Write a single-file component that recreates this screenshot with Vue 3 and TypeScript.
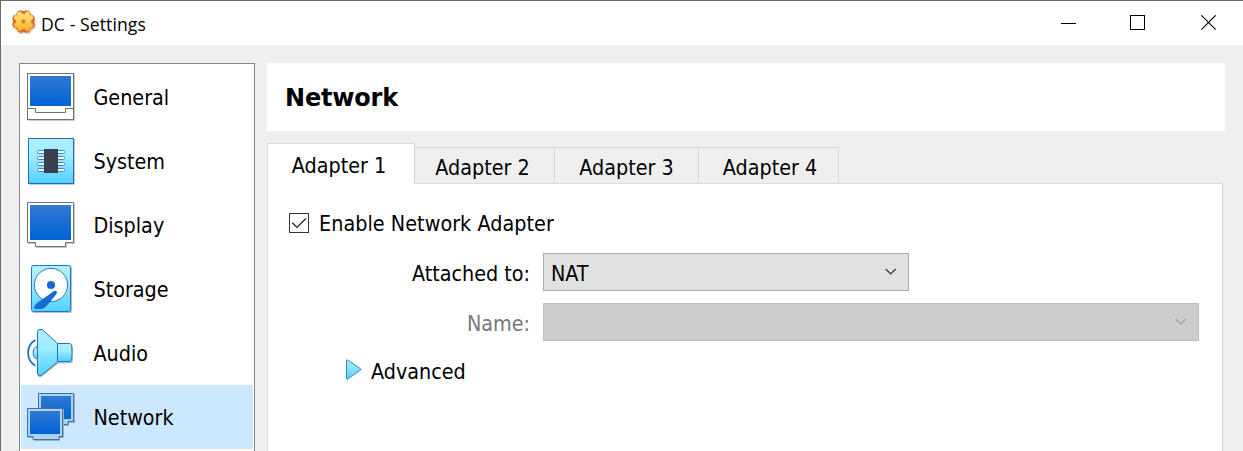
<script setup lang="ts">
import { ref } from 'vue'

const pages = ['General', 'System', 'Display', 'Storage', 'Audio', 'Network']
const currentPage = ref('Network')
const tabs = ['Adapter 1', 'Adapter 2', 'Adapter 3', 'Adapter 4']
const currentTab = ref('Adapter 1')
const enabled = ref(true)
const petals = [0, 45, 90, 135, 180, 225, 270, 315]
const pins = [13, 19, 25, 31]
</script>

<template>
  <div class="window">
    <header class="titlebar">
      <svg class="gear" width="26" height="26" viewBox="0 0 26 26">
        <defs>
          <linearGradient id="gearFill" gradientUnits="userSpaceOnUse" x1="0" y1="2" x2="0" y2="23">
            <stop offset="0" stop-color="#ffe97a" />
            <stop offset="1" stop-color="#fcab2c" />
          </linearGradient>
        </defs>
        <g fill="#9b8f88" opacity="0.5" transform="translate(1 1.2)">
          <circle cx="12.5" cy="12.5" r="10.6" />
          <circle v-for="a in petals" :key="a" cx="12.5" cy="4" r="3.4" :transform="`rotate(${a + 22.5} 12.5 12.5)`" />
        </g>
        <g fill="#de6426">
          <circle cx="12.5" cy="12.5" r="10.6" />
          <circle v-for="a in petals" :key="a" cx="12.5" cy="4.2" r="3.4" :transform="`rotate(${a + 22.5} 12.5 12.5)`" />
        </g>
        <path
          d="M10.9 4.8L9.9 2.6Q7.4 2.8 5.6 4.4L6.7 6.7L4.4 5.6Q2.8 7.4 2.6 9.9L4.8 10.9V14.1L2.6 15.1Q2.8 17.6 4.4 19.4L6.7 18.3L5.6 20.6Q7.4 22.2 9.9 22.4L10.9 20.2H14.1L15.1 22.4Q17.6 22.2 19.4 20.6L18.3 18.3L20.6 19.4Q22.2 17.6 22.4 15.1L20.2 14.1V10.9L22.4 9.9Q22.2 7.4 20.6 5.6L18.3 6.7L19.4 4.4Q17.6 2.8 15.1 2.6L14.1 4.8Z"
          fill="url(#gearFill)"
        />
        <circle cx="12.5" cy="12.5" r="1.8" fill="#c4803c" stroke="#ea8f35" />
      </svg>
      <span class="title">DC - Settings</span>
      <div class="controls">
        <svg width="16" height="16" viewBox="0 0 16 16"><path d="M0 8.5h15" stroke="#000" /></svg>
        <svg width="16" height="16" viewBox="0 0 16 16"><rect x="0.5" y="0.5" width="14" height="14" fill="none" stroke="#000" /></svg>
        <svg width="16" height="16" viewBox="0 0 16 16"><path d="M0.3 0.3l14.4 14.4M14.7 0.3L0.3 14.7" stroke="#000" stroke-width="1.15" /></svg>
      </div>
    </header>

    <div class="body">
      <nav class="sidebar">
        <div
          v-for="p in pages"
          :key="p"
          class="page"
          :class="{ selected: p === currentPage }"
          @click="currentPage = p"
        >
          <svg class="icon" width="50" height="50" viewBox="0 0 50 50">
            <defs>
              <linearGradient id="screen" x1="0" y1="0" x2="0" y2="1">
                <stop offset="0" stop-color="#3279d2" />
                <stop offset="1" stop-color="#0063d6" />
              </linearGradient>
              <linearGradient id="cyan" x1="0" y1="0" x2="0" y2="1">
                <stop offset="0" stop-color="#b0f0ff" />
                <stop offset="0.4" stop-color="#a0ebff" />
                <stop offset="1" stop-color="#4fd0ff" />
              </linearGradient>
            </defs>

            <template v-if="p === 'General'">
              <rect x="2" y="2" width="47" height="47" fill="#c8c8c8" />
              <rect x="1.5" y="1.5" width="46" height="46" fill="#fff" stroke="#707070" />
              <rect x="4" y="4" width="41" height="30" fill="url(#screen)" />
              <path d="M1 36.5h8.5v4h30v-4h8.5" fill="none" stroke="#707070" />
            </template>

            <template v-else-if="p === 'System'">
              <rect x="3" y="3" width="46" height="46" fill="#c8c8c8" />
              <rect x="2.5" y="2.5" width="45" height="45" fill="url(#cyan)" stroke="#1b6dce" />
              <rect v-for="y in pins" :key="y" x="11.5" :y="y + 1.5" width="27" height="3" rx="1" fill="#fff" stroke="#3c86cf" />
              <rect x="18" y="13" width="14" height="24" fill="#39414d" />
            </template>

            <template v-else-if="p === 'Display'">
              <path d="M2 3h47v41h-8v4H10v-4H2z" fill="#c8c8c8" />
              <path d="M1.5 2.5h46v40h-8v4h-30v-4h-8z" fill="#fff" stroke="#707070" />
              <rect x="4" y="5" width="41" height="35" fill="url(#screen)" />
            </template>

            <template v-else-if="p === 'Storage'">
              <rect x="6" y="2" width="40" height="47" rx="2" fill="#bdbdbd" />
              <rect x="5.5" y="1.5" width="39" height="46" rx="2" fill="url(#cyan)" stroke="#2275cf" />
              <circle cx="25" cy="21" r="16.6" fill="#fff" stroke="#2a78cc" />
              <circle cx="25" cy="21" r="4.1" fill="#176bcf" />
              <path d="M27.3 27.6Q30 26 30.9 27.7Q31.2 29.3 28.5 32.5L20.5 42Q17.5 45.5 14 45H9Q7.5 44.6 8.3 42.5Q9 40.3 12.5 38Z" fill="#176bcf" />
            </template>

            <template v-else-if="p === 'Audio'">
              <path d="M12.5 1.8h3l16.8 14.7h12.5q2 .6 2 3v13q0 3-2 3H32.3L15.5 49h-3z" fill="#bbb" />
              <path d="M11.5 19h-2q-2.5 2-2.5 5.8t2.5 5.8h2z" fill="url(#cyan)" stroke="#2172cf" />
              <path d="M31.5 15.5h12q2 0 2.2 2.5.7 6.5 0 13-.2 2.5-2.2 2.5h-12z" fill="url(#cyan)" stroke="#2172cf" />
              <path d="M11.5 3.5q0-2 2.5-2h2.2l15.3 14v18.5L16.5 46.5q-1.8 1.3-3 1.3-2 0-2-2z" fill="url(#cyan)" stroke="#2172cf" />
              <path d="M9.3 11.9q-7.2 4.3-7.2 12.9t7.2 12.9" fill="none" stroke="#1069da" stroke-width="1.7" />
            </template>

            <template v-else>
              <path d="M13 2h36v29h-6v3H13z" fill="#8fb2cf" />
              <path d="M12.5 1.5h35v28h-5.5v3h-29.5z" fill="#a9d4f8" stroke="#4d6f8b" />
              <rect x="15" y="4" width="30" height="23" fill="url(#screen)" />
              <path d="M2 17h36v29h-4v3H8v-3H2z" fill="#8fb2cf" />
              <path d="M1.5 16.5h35v28h-3.5v3h-26v-3h-5.5z" fill="#a9d4f8" stroke="#4d6f8b" />
              <rect x="4" y="19" width="30" height="23" fill="url(#screen)" />
            </template>
          </svg>
          <span>{{ p }}</span>
        </div>
      </nav>

      <main class="content">
        <h1 class="heading">Network</h1>

        <div class="tabs">
          <div
            v-for="t in tabs"
            :key="t"
            class="tab"
            :class="{ active: t === currentTab }"
            @click="currentTab = t"
          >{{ t }}</div>
        </div>

        <section class="panel">
          <div class="check" @click="enabled = !enabled">
            <span class="box">
              <svg v-if="enabled" width="18" height="18" viewBox="0 0 18 18"><path d="M2.3 8.7l4.6 4.7 9-8.9" fill="none" stroke="#222" stroke-width="1.3" /></svg>
            </span>
            <span class="check-label">Enable Network Adapter</span>
          </div>
          <div class="field">
            <label>Attached to:</label>
            <div class="combo attached">
              <span>NAT</span>
              <svg width="12" height="8" viewBox="0 0 12 8"><path d="M0.7 1l5 5 5-5" fill="none" stroke="#333" stroke-width="1.2" /></svg>
            </div>
          </div>
          <div class="field disabled">
            <label>Name:</label>
            <div class="combo name">
              <span></span>
              <svg width="12" height="8" viewBox="0 0 12 8"><path d="M0.7 1l5 5 5-5" fill="none" stroke="#9d9d9d" stroke-width="1.2" /></svg>
            </div>
          </div>
          <div class="advanced">
            <svg width="17" height="22" viewBox="0 0 17 22">
              <defs>
                <linearGradient id="arrow" x1="0" y1="0" x2="0" y2="1">
                  <stop offset="0" stop-color="#b5efff" />
                  <stop offset="1" stop-color="#55cffa" />
                </linearGradient>
              </defs>
              <path d="M0.5 1.6q0-1.2 1.2-.6l13 9q.6.5 0 1l-13 9q-1.2.6-1.2-.6z" fill="url(#arrow)" stroke="#3186d3" />
            </svg>
            <span>Advanced</span>
          </div>
        </section>
      </main>
    </div>
  </div>
</template>

<style>
body {
  overflow: hidden;
}
</style>

<style scoped>
.window {
  box-sizing: border-box;
  width: 1243px;
  height: 451px;
  overflow: hidden;
  display: flex;
  flex-direction: column;
  border-top: 1px solid #6b6b6b;
  border-left: 1px solid #6b696b;
  background: #efefef;
  color: #000;
  font-family: "DejaVu Sans Condensed", "DejaVu Sans", sans-serif;
  font-stretch: condensed;
  font-size: 21.33px;
  line-height: 26px;
  white-space: nowrap;
}
.titlebar {
  flex: none;
  height: 44px;
  display: flex;
  align-items: center;
  background: #fff;
}
.gear {
  margin: -3px 4px 0 10px;
}
.title {
  font-family: "Open Sans", sans-serif;
  font-stretch: normal;
  font-size: 17.6px;
  letter-spacing: 0.08px;
  margin-top: 1px;
}
.controls {
  margin-left: auto;
  margin-right: 26px;
  display: flex;
  gap: 53px;
  margin-top: 0;
}
.controls svg:last-child {
  margin-left: 2px;
}
.body {
  flex: 1;
  display: flex;
  align-items: flex-start;
  padding: 18px 18px 0;
  gap: 12px;
}
.sidebar {
  box-sizing: border-box;
  flex: none;
  width: 236px;
  height: 400px;
  padding: 1px;
  border: 1px solid #828790;
  background: #fff;
}
.page {
  height: 64px;
  display: flex;
  align-items: center;
  gap: 17.5px;
  padding-left: 5px;
}
.page span {
  padding-top: 2px;
}
.page.selected {
  background: #cce8ff;
}
.icon {
  flex: none;
}
.content {
  flex: 1;
}
.heading {
  margin: 0 0 12px;
  height: 68px;
  padding-left: 18px;
  background: #fff;
  font-family: "DejaVu Sans", sans-serif;
  font-stretch: normal;
  font-size: 24px;
  letter-spacing: -0.2px;
  font-weight: bold;
  line-height: 70px;
}
.tabs {
  display: flex;
  align-items: flex-end;
  height: 41px;
}
.tab {
  box-sizing: border-box;
  height: 37px;
  width: 144px;
  border: 1px solid #d9d9d9;
  border-left: 0;
  border-bottom: 0;
  text-align: center;
  line-height: 39px;
}
.tab:nth-child(2),
.tab:last-child {
  width: 140px;
}
.tab:nth-child(2) {
  padding-right: 4px;
}
.tab:last-child {
  padding-left: 3px;
}
.tab.active {
  position: relative;
  z-index: 1;
  width: 148px;
  height: 41px;
  padding-right: 4px;
  border-left: 1px solid #d9d9d9;
  background: #fff;
  line-height: 44px;
}
.panel {
  box-sizing: border-box;
  width: 956px;
  height: 300px;
  margin-top: -1px;
  padding: 29px 0 0 21px;
  border: 1px solid #d9d9d9;
  background: #fff;
}
.check {
  display: flex;
  align-items: center;
  gap: 10px;
  height: 20px;
  letter-spacing: 0.05px;
}
.check-label {
  padding-top: 2px;
}
.box {
  box-sizing: border-box;
  width: 20px;
  height: 20px;
  border: 1px solid #333;
}
.box svg {
  display: block;
}
.field {
  display: flex;
  align-items: center;
  margin-top: 20px;
  height: 38px;
}
.field.disabled {
  margin-top: 12px;
  color: #787878;
}
.field label {
  width: 241px;
  margin-right: 13px;
  text-align: right;
  padding-top: 4px;
}
.combo {
  box-sizing: border-box;
  display: flex;
  align-items: center;
  justify-content: space-between;
  height: 38px;
  padding: 0 11px 0 7px;
  border: 1px solid #adadad;
  background: #e1e1e1;
}
.combo span {
  padding-top: 4px;
}
.attached {
  width: 366px;
}
.name {
  width: 656px;
  background: #ccc;
  border-color: #bfbfbf;
}
.advanced {
  display: flex;
  align-items: center;
  gap: 8px;
  margin: 14px 0 0 57px;
}
.advanced span {
  padding-top: 4px;
}
</style>
